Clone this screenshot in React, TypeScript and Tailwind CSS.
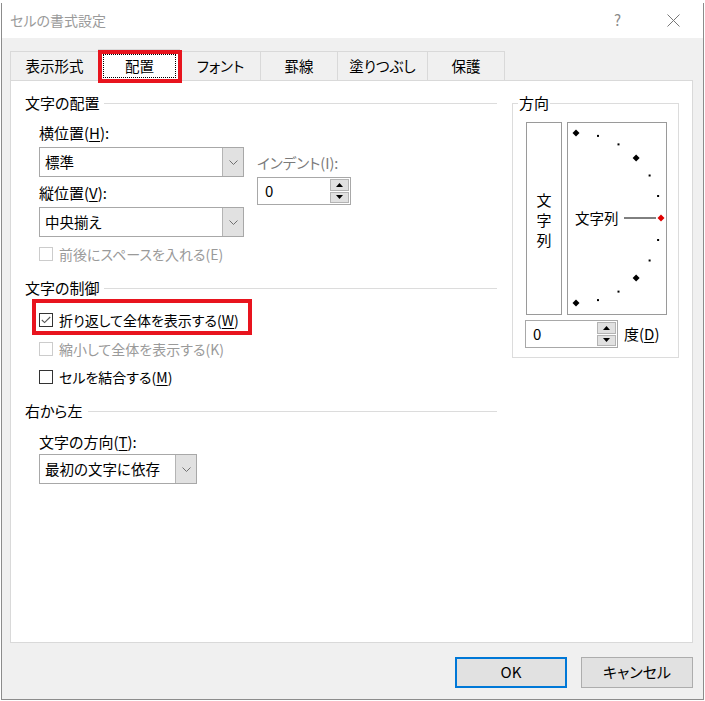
import React from "react";

const Chevron = () => (
  <svg width="9" height="5" viewBox="0 0 9 5">
    <path d="M0.5 0.5 L4.5 4.5 L8.5 0.5" fill="none" stroke="#707070" strokeWidth="1" />
  </svg>
);

function Select({ value, className }: { value: string; className: string }) {
  return (
    <div className={`flex h-[30px] border border-[#a8a8a8] bg-white ${className}`}>
      <span className="flex-1 pl-[5px] text-[14.5px] leading-[28px] text-black">{value}</span>
      <span className="flex w-[21px] items-center justify-center border-l border-[#b4b4b4] bg-[#e1e1e1]">
        <Chevron />
      </span>
    </div>
  );
}

function Spinner({ value, className }: { value: string; className: string }) {
  return (
    <div className={`flex h-[28px] border border-[#a8a8a8] bg-white ${className}`}>
      <span className="flex-1 pl-[7px] text-[15px] leading-[26px] text-black">{value}</span>
      <span className="flex w-[21px] flex-col gap-[1px] p-[1px]">
        <span className="flex h-[12px] items-center justify-center border border-[#b4b4b4] bg-[#e1e1e1]">
          <svg width="7" height="4" viewBox="0 0 7 4">
            <path d="M0 4 L3.5 0 L7 4 Z" fill="#000" />
          </svg>
        </span>
        <span className="flex h-[12px] items-center justify-center border border-[#b4b4b4] bg-[#e1e1e1]">
          <svg width="7" height="4" viewBox="0 0 7 4">
            <path d="M0 0 L3.5 4 L7 0 Z" fill="#000" />
          </svg>
        </span>
      </span>
    </div>
  );
}

function Check({ checked, disabled }: { checked?: boolean; disabled?: boolean }) {
  return (
    <span
      className={`flex h-[14px] w-[14px] items-center justify-center border bg-white ${
        disabled ? "border-[#cccccc]" : "border-[#333333]"
      }`}
    >
      {checked && (
        <svg width="10" height="8" viewBox="0 0 10 8">
          <path d="M0.8 4 L3.6 6.6 L9.2 1" fill="none" stroke="#555" strokeWidth="1.1" />
        </svg>
      )}
    </span>
  );
}

function Heading({ text }: { text: string }) {
  return (
    <div className="flex items-center">
      <span className="text-[15px] leading-[20px] text-black">{text}</span>
      <span className="ml-[5px] h-px flex-1 bg-[#dcdcdc]" />
    </div>
  );
}

// orientation dial: half circle of dots, r=85 around the left middle
function Dial() {
  const cx = 8;
  const cy = 95;
  const r = 85;
  const angles = [90, 75, 60, 45, 30, 15, 0, -15, -30, -45, -60, -75, -90];
  return (
    <div className="relative h-[193px] w-[100px] border border-[#9a9a9a] bg-white">
      <svg className="absolute inset-0" width="98" height="191" viewBox="0 0 98 191">
        <line x1="56" y1={cy} x2="88" y2={cy} stroke="#000" strokeWidth="1" />
        {angles.map((a) => {
          const x = cx + r * Math.cos((a * Math.PI) / 180);
          const y = cy - r * Math.sin((a * Math.PI) / 180);
          if (a === 0) {
            return (
              <polygon
                key={a}
                points={`${x},${y - 3.5} ${x + 3.5},${y} ${x},${y + 3.5} ${x - 3.5},${y}`}
                fill="#e00000"
              />
            );
          }
          if (a % 45 === 0) {
            return (
              <polygon
                key={a}
                points={`${x},${y - 3.5} ${x + 3.5},${y} ${x},${y + 3.5} ${x - 3.5},${y}`}
                fill="#000"
              />
            );
          }
          return <rect key={a} x={x - 1} y={y - 1} width="2" height="2" fill="#000" />;
        })}
      </svg>
      <span className="absolute left-[7px] top-[85px] text-[14.5px] leading-[20px] text-black">文字列</span>
    </div>
  );
}

const tabs = [
  { label: "表示形式", w: "w-[88px]" },
  { label: "配置", w: "w-[82px]", active: true },
  { label: "フォント", w: "w-[80px]" },
  { label: "罫線", w: "w-[77px]" },
  { label: "塗りつぶし", w: "w-[90px]" },
  { label: "保護", w: "w-[78px] border-r" },
];

export default function App() {
  return (
    <div className="relative h-[701px] w-[705px] overflow-hidden bg-white font-['Noto_Sans_CJK_JP','Noto_Sans_CJK_SC',sans-serif] [font-feature-settings:'palt']">
      <div className="h-[3px] bg-white" />
      <div className="ml-[1px] flex h-[697px] w-[703px] flex-col border border-t-0 border-[#8c8c8c] bg-[#f0f0f0]">
        {/* title bar */}
        <div className="flex h-[35px] items-center bg-white pl-[8px]">
          <span className="text-[14px] text-[#9a9a9a]">セルの書式設定</span>
          <span className="ml-auto mr-[46px] text-[15px] text-[#8a8a8a]">?</span>
          <span className="mr-[23px]">
            <svg width="13" height="13" viewBox="0 0 13 13">
              <path d="M0.5 0.5 L12.5 12.5 M12.5 0.5 L0.5 12.5" stroke="#777" strokeWidth="1" />
            </svg>
          </span>
        </div>

        <div className="flex flex-1 flex-col pl-[8px] pt-[11px]">
          {/* tabs */}
          <div className="flex h-[31px] items-end">
            {tabs.map((t) =>
              t.active ? (
                <div
                  key={t.label}
                  className={`relative z-10 -mb-px flex h-[32px] items-center justify-center border-l border-t border-[#d9d9d9] bg-white ${t.w}`}
                >
                  <span className="absolute inset-x-[4px] bottom-[3px] top-[4px] border border-dotted border-black" />
                  <span className="relative text-[14.5px] leading-[20px] text-black">{t.label}</span>
                  <span className="absolute -left-[1px] -right-[2px] top-0 -bottom-[2px] border-[4px] border-[#e8141e]" />
                </div>
              ) : (
                <div
                  key={t.label}
                  className={`flex h-[29px] items-center justify-center border-l border-t border-[#d9d9d9] bg-[#f0f0f0] ${t.w}`}
                >
                  <span className="text-[14.5px] leading-[20px] text-black">{t.label}</span>
                </div>
              )
            )}
          </div>

          {/* panel */}
          <div className="flex h-[563px] w-[683px] border border-[#d9d9d9] bg-white pl-[14px] pt-[12px]">
            <div className="flex w-[472px] flex-col">
              <Heading text="文字の配置" />
              <div className="mt-[10px] flex">
                <div className="flex flex-col pl-[14px]">
                  <span className="text-[15px] leading-[20px] text-black">
                    横位置(<span className="underline underline-offset-2">H</span>):
                  </span>
                  <Select value="標準" className="mt-[4px] w-[205px]" />
                  <span className="mt-[6px] text-[15px] leading-[20px] text-black">
                    縦位置(<span className="underline underline-offset-2">V</span>):
                  </span>
                  <Select value="中央揃え" className="mt-[4px] w-[205px]" />
                </div>
                <div className="ml-[13px] flex flex-col">
                  <span className="mt-[30px] text-[14.5px] leading-[20px] text-[#7a7a7a]">インデント(I):</span>
                  <Spinner value="0" className="mt-[4px] w-[94px]" />
                </div>
              </div>

              <div className="mt-[7px] flex h-[20px] items-center gap-[6px] pl-[14px]">
                <Check disabled />
                <span className="text-[14px] leading-[20px] text-[#9a9a9a]">前後にスペースを入れる(E)</span>
              </div>

              <div className="mt-[14px]">
                <Heading text="文字の制御" />
              </div>

              <div className="relative mt-[12px] flex h-[20px] items-center gap-[6px] pl-[14px]">
                <Check checked />
                <span className="text-[14px] leading-[20px] text-black">
                  折り返して全体を表示する(<span className="underline underline-offset-2">W</span>)
                </span>
                <span className="absolute left-[7px] top-[-11px] h-[36px] w-[220px] border-[4px] border-[#e8141e]" />
              </div>
              <div className="mt-[9px] flex h-[20px] items-center gap-[6px] pl-[14px]">
                <Check disabled />
                <span className="text-[14px] leading-[20px] text-[#9a9a9a]">縮小して全体を表示する(K)</span>
              </div>
              <div className="mt-[8px] flex h-[20px] items-center gap-[6px] pl-[14px]">
                <Check />
                <span className="text-[14px] leading-[20px] text-black">
                  セルを結合する(<span className="underline underline-offset-2">M</span>)
                </span>
              </div>

              <div className="mt-[14px]">
                <Heading text="右から左" />
              </div>
              <div className="mt-[11px] flex flex-col pl-[14px]">
                <span className="text-[15px] leading-[20px] text-black">
                  文字の方向(<span className="underline underline-offset-2">T</span>):
                </span>
                <Select value="最初の文字に依存" className="mt-[2px] w-[158px]" />
              </div>
            </div>

            {/* orientation group */}
            <fieldset className="ml-[15px] h-[265px] w-[167px] border border-[#dcdcdc]">
              <legend className="ml-[5px] px-[1px] text-[15px] leading-[20px] text-black">方向</legend>
              <div className="flex flex-col pl-[12px] pt-[9px]">
                <div className="flex gap-[5px]">
                  <div className="ml-[1px] flex h-[193px] w-[36px] flex-col items-center justify-center border border-[#9a9a9a] bg-white pt-[3px] text-[15px] leading-[20px] text-black">
                    <span>文</span>
                    <span>字</span>
                    <span>列</span>
                  </div>
                  <Dial />
                </div>
                <div className="mt-[5px] flex items-center">
                  <Spinner value="0" className="w-[93px]" />
                  <span className="ml-[6px] text-[15px] leading-[20px] text-black">
                    度(<span className="underline underline-offset-2">D</span>)
                  </span>
                </div>
              </div>
            </fieldset>
          </div>

          {/* buttons */}
          <div className="mt-[14px] flex w-[683px] justify-end gap-[14px]">
            <button className="h-[31px] w-[112px] border-2 border-[#0078d7] bg-[#e1e1e1] text-[15px] text-black">
              OK
            </button>
            <button className="h-[31px] w-[112px] border border-[#adadad] bg-[#e1e1e1] text-[15px] text-black">
              キャンセル
            </button>
          </div>
        </div>
      </div>
    </div>
  );
}
